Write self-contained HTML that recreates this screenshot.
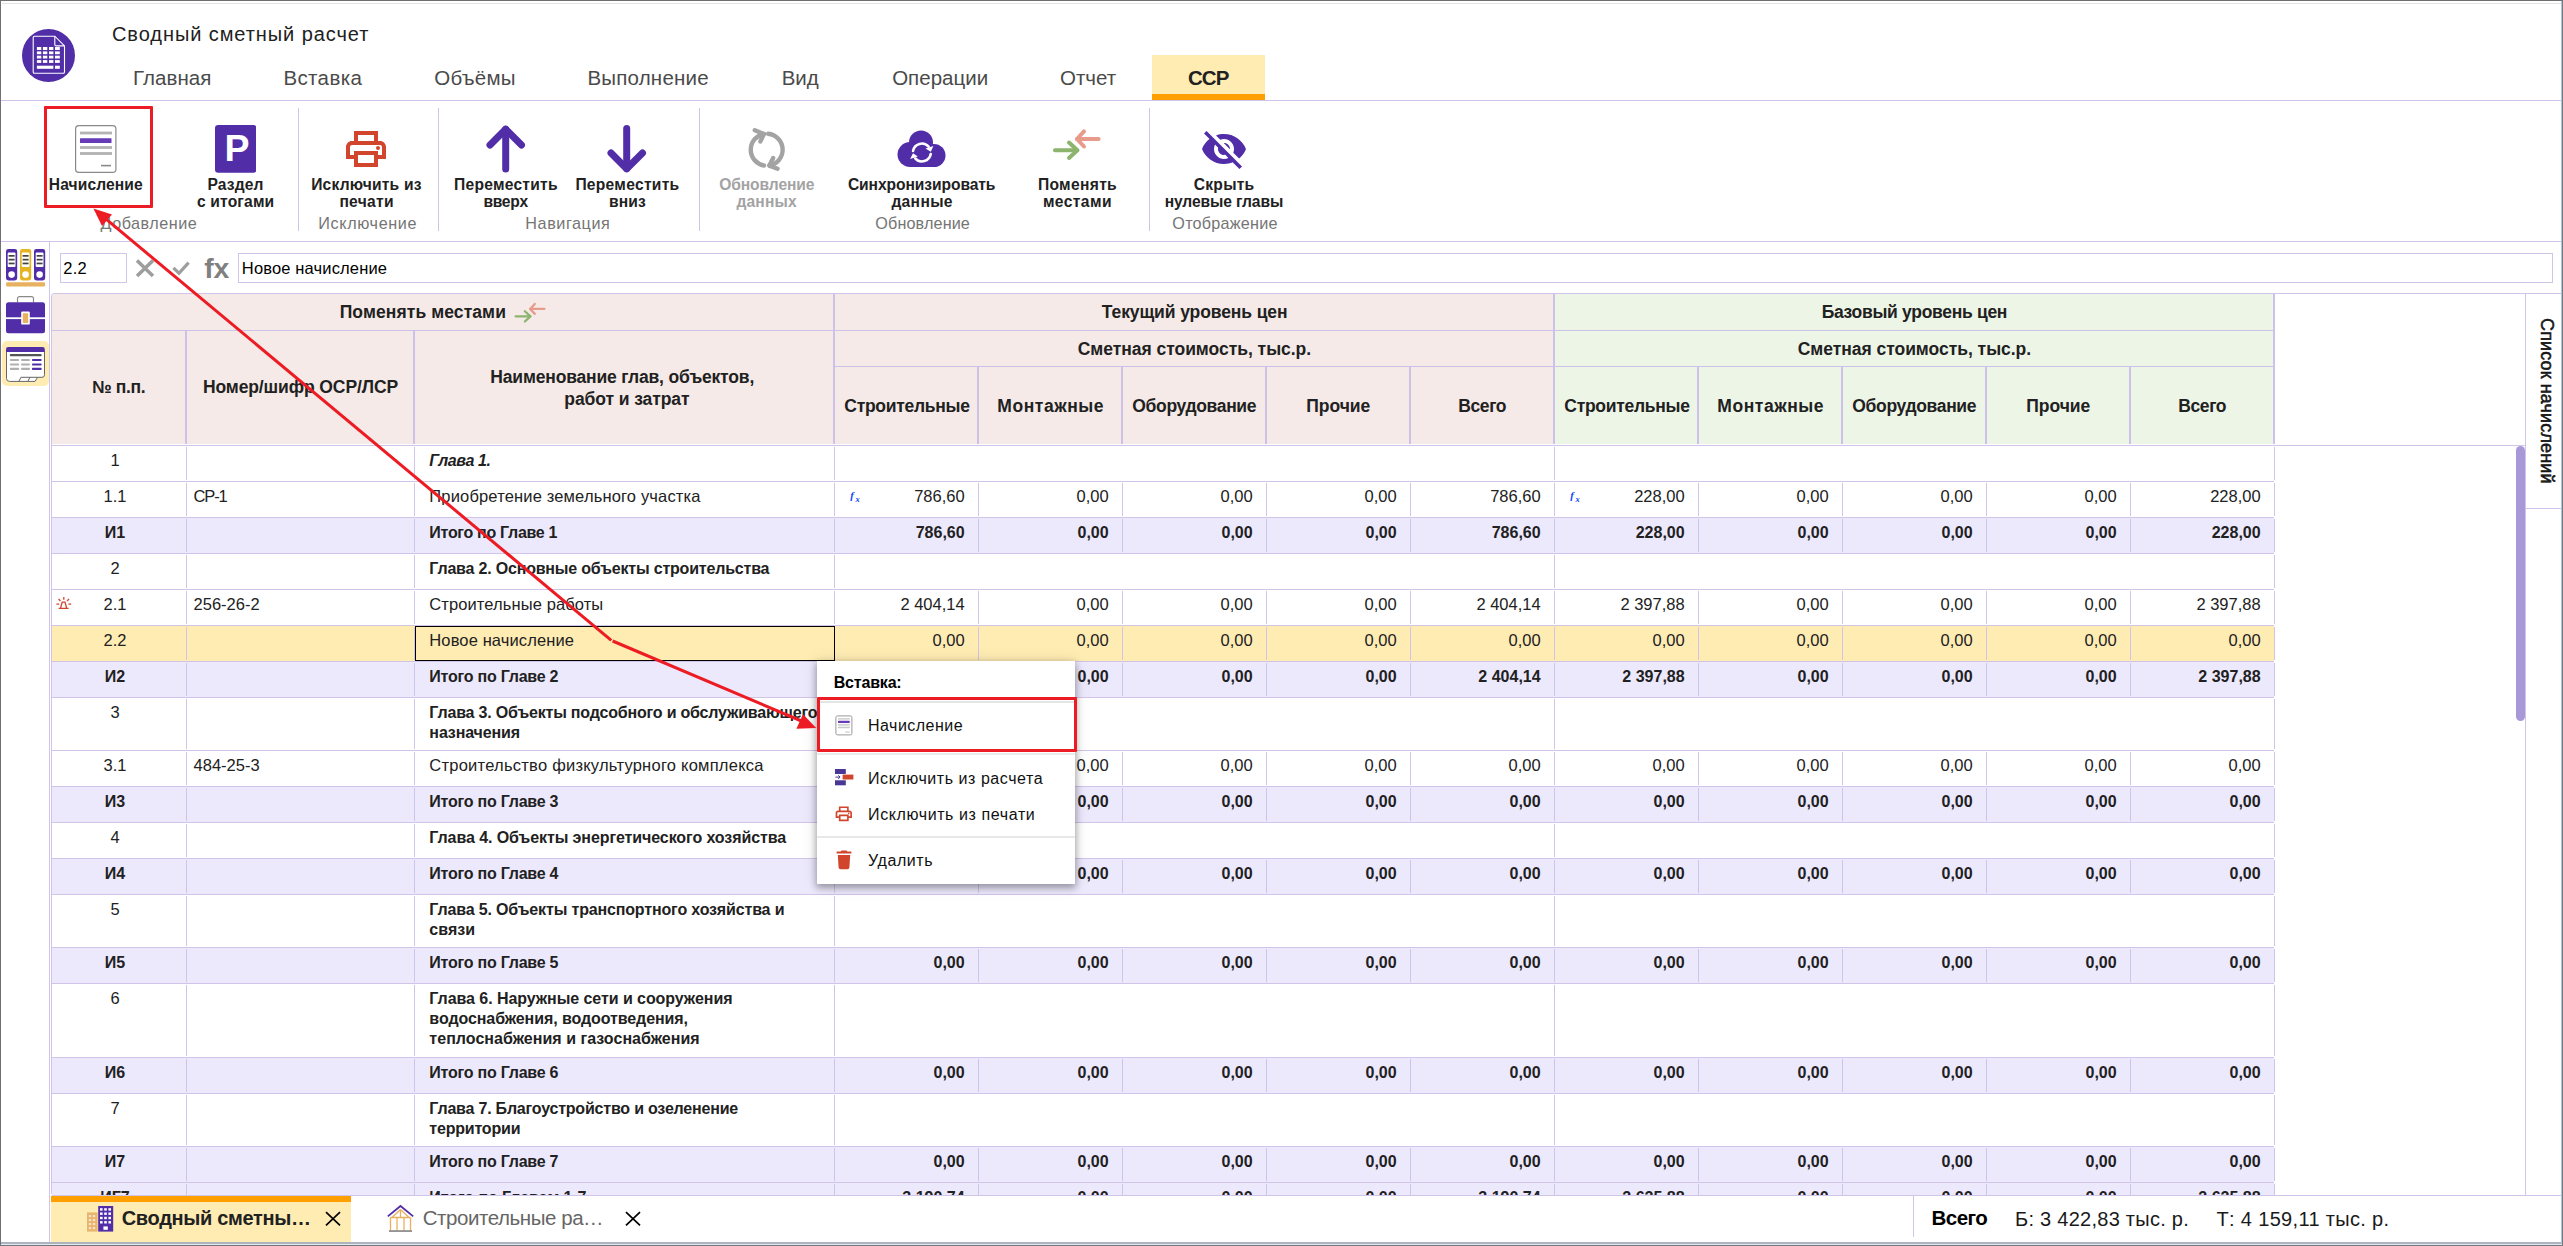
<!DOCTYPE html>
<html lang="ru"><head><meta charset="utf-8"><title>Сводный сметный расчет</title>
<style>
html,body{margin:0;padding:0;background:#fff}
body{width:2563px;height:1246px;overflow:hidden;position:relative;font-family:"Liberation Sans",sans-serif}
#r,#r div,#r svg,#r span{position:absolute;display:block}
#r{left:0;top:0;width:2563px;height:1246px;overflow:hidden}
#r span{white-space:nowrap;line-height:20px}
#r span{color:#212121}
</style></head>
<body><div id="r">
<svg style="left:22px;top:28.5px;" width="53" height="53" viewBox="0 0 53 53"><circle cx="26.5" cy="26.5" r="26.5" fill="#512da8"/>
<path d="M12.5 7.2h20.3l9.7 9.7v26a1.3 1.3 0 0 1-1.3 1.3h-28.7a1.3 1.3 0 0 1-1.3-1.3v-34.4a1.3 1.3 0 0 1 1.3-1.3z" fill="#512da8" stroke="#fff" stroke-width="1.1"/>
<path d="M32.8 7.2v8.2a1.5 1.5 0 0 0 1.5 1.5h8.2" fill="none" stroke="#fff" stroke-width="1.1"/>
<g fill="#fff"><rect x="14.9" y="18" width="4.4" height="3"/><rect x="20.9" y="18" width="4.4" height="3"/><rect x="27" y="18" width="4.4" height="3"/><rect x="33" y="18" width="4.8" height="3"/><rect x="14.9" y="22.4" width="4.4" height="2.8"/><rect x="20.9" y="22.4" width="4.4" height="2.8"/><rect x="27" y="22.4" width="4.4" height="2.8"/><rect x="33" y="22.4" width="4.8" height="2.8"/><rect x="14.9" y="26.7" width="4.4" height="2.8"/><rect x="20.9" y="26.7" width="4.4" height="2.8"/><rect x="27" y="26.7" width="4.4" height="2.8"/><rect x="33" y="26.7" width="4.8" height="2.8"/><rect x="14.9" y="31.1" width="4.4" height="2.8"/><rect x="20.9" y="31.1" width="4.4" height="2.8"/><rect x="27" y="31.1" width="4.4" height="2.8"/><rect x="33" y="31.1" width="4.8" height="2.8"/><rect x="14.9" y="36.7" width="16.5" height="3.1"/><rect x="33" y="36.7" width="4.8" height="3.1"/></g></svg>
<span style="left:112.00px;top:24px;font-size:20px;letter-spacing:0.927px;">Сводный сметный расчет</span>
<span style="left:132.93px;top:68px;font-size:20.5px;color:#4a4a4a;letter-spacing:0.067px;">Главная</span>
<span style="left:283.43px;top:68px;font-size:20.5px;color:#4a4a4a;letter-spacing:0.372px;">Вставка</span>
<span style="left:434.18px;top:68px;font-size:20.5px;color:#4a4a4a;letter-spacing:0.275px;">Объёмы</span>
<span style="left:587.43px;top:68px;font-size:20.5px;color:#4a4a4a;letter-spacing:0.206px;">Выполнение</span>
<span style="left:781.68px;top:68px;font-size:20.5px;color:#4a4a4a;letter-spacing:-0.079px;">Вид</span>
<span style="left:892.18px;top:68px;font-size:20.5px;color:#4a4a4a;letter-spacing:0.004px;">Операции</span>
<span style="left:1059.93px;top:68px;font-size:20.5px;color:#4a4a4a;letter-spacing:0.015px;">Отчет</span>
<div style="left:1152px;top:55px;width:113px;height:45px;background:#ffecb3;"></div>
<div style="left:1152px;top:94px;width:113px;height:6px;background:#ffa000;"></div>
<span style="left:1187.93px;top:68px;font-size:20.5px;font-weight:700;letter-spacing:-0.931px;">ССР</span>
<div style="left:1px;top:100px;width:2560px;height:1px;background:#d1c4e9;"></div>
<div style="left:298px;top:108px;width:1px;height:123px;background:#d1c4e9;"></div>
<div style="left:438px;top:108px;width:1px;height:123px;background:#d1c4e9;"></div>
<div style="left:699px;top:108px;width:1px;height:123px;background:#d1c4e9;"></div>
<div style="left:1149px;top:108px;width:1px;height:123px;background:#d1c4e9;"></div>
<div style="left:1px;top:241px;width:2560px;height:1px;background:#d1c4e9;"></div>
<svg style="left:75px;top:125px;" width="41.5" height="48.0" viewBox="0 0 41.5 48"><rect x="0.6" y="0.6" width="40.3" height="46.8" rx="3.2" fill="#fff" stroke="#8a8a8a" stroke-width="1.2"/>
<rect x="5" y="6.6" width="32" height="2.8" fill="#b3b3b3"/>
<rect x="5" y="13.2" width="31.5" height="4.8" rx="0.5" fill="#673ab7"/>
<rect x="5" y="21.1" width="32" height="2.8" fill="#b3b3b3"/>
<rect x="5" y="27.1" width="32" height="2.8" fill="#b3b3b3"/>
<rect x="26" y="39.8" width="10" height="1.6" fill="#8a8a8a"/></svg>
<svg style="left:214.7px;top:125px;" width="41.4" height="48" viewBox="0 0 41.4 48"><rect x="0" y="0" width="41.4" height="47.8" rx="3.2" fill="#512da8"/></svg>
<span style="left:224.39px;top:138px;font-size:37.5px;font-weight:700;color:#fff;">Р</span>
<svg style="left:342px;top:125px;" width="48" height="48" viewBox="0 0 24 24"><path fill="#d0452c" d="M19 8h-1V3H6v5H5c-1.66 0-3 1.34-3 3v6h4v4h12v-4h4v-6c0-1.66-1.34-3-3-3zM8 5h8v3H8V5zm8 12v2H8v-4h8v2zm2-2v-2H6v2H4v-4c0-.55.45-1 1-1h14c.55 0 1 .45 1 1v4h-2z"/><circle cx="18" cy="11.5" r="1" fill="#d0452c"/></svg>
<svg style="left:480px;top:120px;" width="52" height="58" viewBox="0 0 52 58"><g fill="none" stroke="#512da8" stroke-width="7" stroke-linecap="round" stroke-linejoin="round"><path d="M25.7 9.2V49"/><path d="M10 25L25.7 9.2 41.5 25"/></g></svg>
<svg style="left:601px;top:120px;" width="52" height="58" viewBox="0 0 52 58"><g fill="none" stroke="#512da8" stroke-width="7" stroke-linecap="round" stroke-linejoin="round"><path d="M25.7 8.5V48.6"/><path d="M10 33L25.7 48.8 41.5 33"/></g></svg>
<svg style="left:740px;top:122px;" width="54" height="56" viewBox="0 0 54 56"><g transform="translate(5,4)" fill="none" stroke="#a3a3a3" stroke-width="4.4" stroke-linecap="round" stroke-linejoin="round">
<path d="M18.97 7.94A16 16 0 0 0 19 39.46"/>
<path d="M9.8 4.2L18.9 8 15.4 15.4"/>
<path d="M23.1 7.8A16 16 0 0 1 24.35 39.5"/>
<path d="M28.2 32L24.4 39.6 32.6 42.8"/></g></svg>
<svg style="left:896px;top:129px;" width="52" height="40" viewBox="0 0 52 40"><g fill="#512da8"><circle cx="25" cy="13.6" r="12"/><circle cx="14" cy="25.5" r="12.5"/><circle cx="38" cy="26.5" r="11.5"/><rect x="14" y="20" width="24" height="18"/></g>
<g fill="none" stroke="#fff" stroke-width="2.6" stroke-linecap="round">
<path d="M17.04 21.94A9 9 0 0 1 32.6 17.6"/><path d="M34.76 25.06A9 9 0 0 1 19.2 29.4"/></g>
<path d="M37.4 17L34.8 22.8 29.5 19.4zM14.1 30L17 24.2 21.8 27.6z" fill="#fff"/></svg>
<svg style="left:1051px;top:127px;" width="52.0" height="36.0" viewBox="0 0 52 36"><g fill="none" stroke-width="4" stroke-linecap="round" stroke-linejoin="round">
<g stroke="#e89a8b"><path d="M26 12H47.6"/><path d="M33 4.4L26 12l7 7.5"/></g>
<g stroke="#8cb46c"><path d="M4 23.2H26.2"/><path d="M18 15.5l8.4 7.7L18 31"/></g></g></svg>
<svg style="left:1200px;top:125px;" width="48" height="48" viewBox="0 0 24 24"><path fill="#512da8" d="M12 7c2.76 0 5 2.24 5 5 0 .65-.13 1.26-.36 1.83l2.92 2.92c1.51-1.26 2.7-2.89 3.43-4.75-1.73-4.39-6-7.5-11-7.5-1.4 0-2.74.25-3.98.7l2.16 2.16C10.74 7.13 11.35 7 12 7zM2 4.27l2.28 2.28.46.46C3.08 8.3 1.78 10.02 1 12c1.73 4.39 6 7.5 11 7.5 1.55 0 3.03-.3 4.38-.84l.42.42L19.73 22 21 20.73 3.27 3 2 4.27zM7.53 9.8l1.55 1.55c-.05.21-.08.43-.08.65 0 1.66 1.34 3 3 3 .22 0 .44-.03.65-.08l1.55 1.55c-.67.33-1.41.53-2.2.53-2.76 0-5-2.24-5-5 0-.79.2-1.53.53-2.2zm4.31-.78l3.15 3.15.02-.16c0-1.66-1.34-3-3-3l-.17.01z"/></svg>
<span style="left:48.78px;top:175px;font-size:15.6px;font-weight:700;letter-spacing:0.113px;">Начисление</span>
<span style="left:207.38px;top:175px;font-size:15.6px;font-weight:700;letter-spacing:0.159px;">Раздел</span>
<span style="left:196.88px;top:192px;font-size:15.6px;font-weight:700;letter-spacing:0.187px;">с итогами</span>
<span style="left:311.18px;top:175px;font-size:15.6px;font-weight:700;letter-spacing:0.204px;">Исключить из</span>
<span style="left:339.38px;top:192px;font-size:15.6px;font-weight:700;letter-spacing:0.287px;">печати</span>
<span style="left:454.08px;top:175px;font-size:15.6px;font-weight:700;letter-spacing:0.239px;">Переместить</span>
<span style="left:483.38px;top:192px;font-size:15.6px;font-weight:700;letter-spacing:-0.237px;">вверх</span>
<span style="left:575.38px;top:175px;font-size:15.6px;font-weight:700;letter-spacing:0.279px;">Переместить</span>
<span style="left:608.98px;top:192px;font-size:15.6px;font-weight:700;letter-spacing:0.149px;">вниз</span>
<span style="left:719.13px;top:175px;font-size:15.6px;font-weight:700;color:#a3a3a3;letter-spacing:-0.089px;">Обновление</span>
<span style="left:736.38px;top:192px;font-size:15.6px;font-weight:700;color:#a3a3a3;letter-spacing:0.187px;">данных</span>
<span style="left:847.88px;top:175px;font-size:15.6px;font-weight:700;letter-spacing:-0.072px;">Синхронизировать</span>
<span style="left:891.38px;top:192px;font-size:15.6px;font-weight:700;letter-spacing:0.337px;">данные</span>
<span style="left:1037.88px;top:175px;font-size:15.6px;font-weight:700;letter-spacing:0.337px;">Поменять</span>
<span style="left:1042.88px;top:192px;font-size:15.6px;font-weight:700;letter-spacing:0.414px;">местами</span>
<span style="left:1193.78px;top:175px;font-size:15.6px;font-weight:700;letter-spacing:0.260px;">Скрыть</span>
<span style="left:1164.63px;top:192px;font-size:15.6px;font-weight:700;letter-spacing:-0.098px;">нулевые главы</span>
<span style="left:100.60px;top:213px;font-size:16.2px;color:#757575;letter-spacing:0.491px;">Добавление</span>
<span style="left:318.35px;top:213px;font-size:16.2px;color:#757575;letter-spacing:0.609px;">Исключение</span>
<span style="left:525.35px;top:213px;font-size:16.2px;color:#757575;letter-spacing:0.558px;">Навигация</span>
<span style="left:875.35px;top:213px;font-size:16.2px;color:#757575;letter-spacing:0.118px;">Обновление</span>
<span style="left:1172.35px;top:213px;font-size:16.2px;color:#757575;letter-spacing:0.221px;">Отображение</span>
<div style="left:44px;top:105.5px;width:109.4px;height:102.8px;border:3px solid #ed1c24;border-radius:1px;box-sizing:border-box"></div>
<div style="left:49px;top:241px;width:1px;height:1001px;background:#d1c4e9;"></div>
<svg style="left:6px;top:249px;" width="40" height="38" viewBox="0 0 40 38"><rect x="0" y="0" width="11.2" height="31.5" rx="2.4" fill="#512da8"/><rect x="1.7" y="3.6" width="7.8" height="14.5" rx="1" fill="#fff"/><rect x="2.6" y="6.0" width="6" height="1.7" fill="#444"/><rect x="2.6" y="9.8" width="6" height="1.7" fill="#444"/><rect x="2.6" y="13.6" width="6" height="1.7" fill="#444"/><circle cx="5.6" cy="25.6" r="3.3" fill="#fff"/><rect x="14" y="0" width="11.2" height="31.5" rx="2.4" fill="#e6b422"/><rect x="15.7" y="3.6" width="7.8" height="14.5" rx="1" fill="#fff"/><rect x="16.6" y="6.0" width="6" height="1.7" fill="#444"/><rect x="16.6" y="9.8" width="6" height="1.7" fill="#444"/><rect x="16.6" y="13.6" width="6" height="1.7" fill="#444"/><circle cx="19.6" cy="25.6" r="3.3" fill="#fff"/><rect x="28" y="0" width="11.2" height="31.5" rx="2.4" fill="#512da8"/><rect x="29.7" y="3.6" width="7.8" height="14.5" rx="1" fill="#fff"/><rect x="30.6" y="6.0" width="6" height="1.7" fill="#444"/><rect x="30.6" y="9.8" width="6" height="1.7" fill="#444"/><rect x="30.6" y="13.6" width="6" height="1.7" fill="#444"/><circle cx="33.6" cy="25.6" r="3.3" fill="#fff"/><rect x="0" y="33.2" width="39.2" height="4.4" rx="1.5" fill="#e8b15f"/></svg>
<svg style="left:6px;top:295px;" width="40" height="40" viewBox="0 0 40 40"><path d="M11.5 7.4V3.6a2 2 0 0 1 2-2h12a2 2 0 0 1 2 2v3.8" fill="none" stroke="#8a8a8a" stroke-width="1.2"/>
<rect x="0" y="7.3" width="39" height="31" rx="2.5" fill="#512da8"/>
<rect x="0" y="22.3" width="39" height="1.8" fill="#fff"/>
<rect x="15.2" y="16.6" width="8.6" height="13" rx="1.2" fill="#fff"/><rect x="16.8" y="18.3" width="5.4" height="9.6" rx="0.6" fill="#e8b15f"/></svg>
<div style="left:1.7px;top:341px;width:47px;height:45px;background:#ffecb3;border-radius:5px"></div>
<svg style="left:6px;top:346px;" width="40" height="40" viewBox="0 0 40 40"><path d="M0.5 5.5V32.4a3 3 0 0 0 3 3H29l2.6-4.1H36a2.5 2.5 0 0 0 2.5-2.5V5.5z" fill="#fff" stroke="#666" stroke-width="1"/>
<path d="M13 35.2l1.9-3.9H31.6M22 35.2l1.9-3.9" fill="none" stroke="#666" stroke-width="1"/>
<path d="M0 3.2a2.2 2.2 0 0 1 2.2-2.2h34.4a2.2 2.2 0 0 1 2.2 2.2v2.9h-38.8z" fill="#512da8"/>
<rect x="3.8" y="8" width="31.9" height="2.3" rx="1.1" fill="#555"/>
<rect x="3.8" y="13" width="9.4" height="2.1" rx="1" fill="#b0b0b0"/><rect x="15" y="13" width="9" height="2.1" rx="1" fill="#b0b0b0"/><rect x="25.9" y="13" width="9.8" height="2.1" rx="1" fill="#512da8"/><rect x="3.8" y="17.4" width="9.4" height="2.1" rx="1" fill="#b0b0b0"/><rect x="15" y="17.4" width="9" height="2.1" rx="1" fill="#b0b0b0"/><rect x="25.9" y="17.4" width="9.8" height="2.1" rx="1" fill="#512da8"/><rect x="3.8" y="21.8" width="9.4" height="2.1" rx="1" fill="#b0b0b0"/><rect x="15" y="21.8" width="9" height="2.1" rx="1" fill="#b0b0b0"/><rect x="25.9" y="21.8" width="9.8" height="2.1" rx="1" fill="#512da8"/></svg>
<div style="left:60px;top:253px;width:67px;height:30px;border:1px solid #d1c4e9;box-sizing:border-box;background:#fff"></div>
<span style="left:63.24px;top:258px;font-size:16.5px;color:#000;letter-spacing:0.259px;">2.2</span>
<svg style="left:132px;top:256px;" width="26" height="24" viewBox="0 0 26 24"><path d="M5 4.5L21 20M21 4.5L5 20" stroke="#9e9e9e" stroke-width="3.6" fill="none"/></svg>
<svg style="left:169px;top:257px;" width="24" height="22" viewBox="0 0 24 22"><path d="M4.4 10.8L10 16.2 19.6 5.6" stroke="#9e9e9e" stroke-width="3.2" fill="none"/></svg>
<span style="left:204.16px;top:258px;font-size:28.4px;font-weight:700;color:#808080;letter-spacing:-0.062px;">fx</span>
<div style="left:238px;top:253px;width:2315px;height:30px;border:1px solid #d1c4e9;box-sizing:border-box;background:#fff"></div>
<span style="left:241.84px;top:258px;font-size:16.5px;color:#000;letter-spacing:0.149px;">Новое начисление</span>
<div style="left:51px;top:293px;width:2475px;height:903px;border:1px solid #d1c4e9;border-radius:4px 0 0 4px;box-sizing:border-box;border-right:none"></div>
<div style="left:2525px;top:293px;width:1px;height:902px;background:#d1c4e9;"></div>
<div style="left:52px;top:1195px;width:2509px;height:1px;background:#d1c4e9;"></div>
<div style="left:52px;top:294px;width:1502px;height:150px;background:#f5eae7;border-radius:3px 0 0 0"></div>
<div style="left:1554px;top:294px;width:720px;height:150px;background:#edf5e7;"></div>
<div style="left:52px;top:445px;width:2473px;height:1px;background:#d1c4e9;"></div>
<div style="left:52px;top:330px;width:2222px;height:1px;background:#ccc1e9;"></div>
<div style="left:834px;top:366px;width:1440px;height:1px;background:#ccc1e9;"></div>
<div style="left:185px;top:331px;width:2px;height:113px;background:#ccc1e9;"></div>
<div style="left:413px;top:331px;width:2px;height:113px;background:#ccc1e9;"></div>
<div style="left:833px;top:294px;width:2px;height:150px;background:#ccc1e9;"></div>
<div style="left:1553px;top:294px;width:2px;height:150px;background:#ccc1e9;"></div>
<div style="left:2273px;top:294px;width:2px;height:150px;background:#ccc1e9;"></div>
<div style="left:977px;top:367px;width:2px;height:77px;background:#ccc1e9;"></div>
<div style="left:1121px;top:367px;width:2px;height:77px;background:#ccc1e9;"></div>
<div style="left:1265px;top:367px;width:2px;height:77px;background:#ccc1e9;"></div>
<div style="left:1409px;top:367px;width:2px;height:77px;background:#ccc1e9;"></div>
<div style="left:1697px;top:367px;width:2px;height:77px;background:#ccc1e9;"></div>
<div style="left:1841px;top:367px;width:2px;height:77px;background:#ccc1e9;"></div>
<div style="left:1985px;top:367px;width:2px;height:77px;background:#ccc1e9;"></div>
<div style="left:2129px;top:367px;width:2px;height:77px;background:#ccc1e9;"></div>
<span style="left:339.70px;top:302px;font-size:17.5px;font-weight:700;letter-spacing:0.090px;">Поменять местами</span>
<svg style="left:513.3px;top:300.6px;" width="34.3" height="23.8" viewBox="0 0 52 36"><g fill="none" stroke-width="3.4" stroke-linecap="round" stroke-linejoin="round">
<g stroke="#e89a8b"><path d="M26 12H47.6"/><path d="M33 4.4L26 12l7 7.5"/></g>
<g stroke="#8cb46c"><path d="M4 23.2H26.2"/><path d="M18 15.5l8.4 7.7L18 31"/></g></g></svg>
<span style="left:92.30px;top:377px;font-size:17.5px;font-weight:700;letter-spacing:-0.402px;">№ п.п.</span>
<span style="left:202.90px;top:377px;font-size:17.5px;font-weight:700;letter-spacing:-0.100px;">Номер/шифр ОСР/ЛСР</span>
<span style="left:490.30px;top:367px;font-size:17.5px;font-weight:700;letter-spacing:-0.172px;">Наименование глав, объектов,</span>
<span style="left:564.30px;top:389px;font-size:17.5px;font-weight:700;letter-spacing:-0.084px;">работ и затрат</span>
<span style="left:1101.80px;top:302px;font-size:17.5px;font-weight:700;letter-spacing:-0.103px;">Текущий уровень цен</span>
<span style="left:1077.70px;top:339px;font-size:17.5px;font-weight:700;letter-spacing:-0.032px;">Сметная стоимость, тыс.р.</span>
<span style="left:844.30px;top:396px;font-size:17.5px;font-weight:700;letter-spacing:-0.278px;">Строительные</span>
<span style="left:997.30px;top:396px;font-size:17.5px;font-weight:700;letter-spacing:0.554px;">Монтажные</span>
<span style="left:1132.30px;top:396px;font-size:17.5px;font-weight:700;letter-spacing:-0.343px;">Оборудование</span>
<span style="left:1306.30px;top:396px;font-size:17.5px;font-weight:700;letter-spacing:-0.052px;">Прочие</span>
<span style="left:1458.30px;top:396px;font-size:17.5px;font-weight:700;letter-spacing:-0.409px;">Всего</span>
<span style="left:1821.70px;top:302px;font-size:17.5px;font-weight:700;letter-spacing:-0.304px;">Базовый уровень цен</span>
<span style="left:1797.70px;top:339px;font-size:17.5px;font-weight:700;letter-spacing:-0.032px;">Сметная стоимость, тыс.р.</span>
<span style="left:1564.30px;top:396px;font-size:17.5px;font-weight:700;letter-spacing:-0.278px;">Строительные</span>
<span style="left:1717.30px;top:396px;font-size:17.5px;font-weight:700;letter-spacing:0.554px;">Монтажные</span>
<span style="left:1852.30px;top:396px;font-size:17.5px;font-weight:700;letter-spacing:-0.343px;">Оборудование</span>
<span style="left:2026.30px;top:396px;font-size:17.5px;font-weight:700;letter-spacing:-0.053px;">Прочие</span>
<span style="left:2178.30px;top:396px;font-size:17.5px;font-weight:700;letter-spacing:-0.409px;">Всего</span>
<div id="tb" style="left:0;top:446px;width:2526px;height:749px;overflow:hidden">
<div style="left:52px;top:35px;width:2222px;height:1px;background:#d1c4e9;"></div>
<div style="left:186px;top:1px;width:1px;height:33px;background:#d1c4e9;"></div>
<div style="left:414px;top:1px;width:1px;height:33px;background:#d1c4e9;"></div>
<div style="left:834px;top:1px;width:1px;height:33px;background:#d1c4e9;"></div>
<div style="left:1554px;top:1px;width:1px;height:33px;background:#d1c4e9;"></div>
<div style="left:2274px;top:1px;width:1px;height:33px;background:#d1c4e9;"></div>
<span style="left:110.41px;top:4px;font-size:16.5px;">1</span>
<span style="left:429.36px;top:5px;font-size:16px;font-weight:700;font-style:italic;letter-spacing:-0.369px;">Глава 1.</span>
<div style="left:52px;top:71px;width:2222px;height:1px;background:#d1c4e9;"></div>
<div style="left:186px;top:37px;width:1px;height:33px;background:#d1c4e9;"></div>
<div style="left:414px;top:37px;width:1px;height:33px;background:#d1c4e9;"></div>
<div style="left:834px;top:37px;width:1px;height:33px;background:#d1c4e9;"></div>
<div style="left:978px;top:37px;width:1px;height:33px;background:#d1c4e9;"></div>
<div style="left:1122px;top:37px;width:1px;height:33px;background:#d1c4e9;"></div>
<div style="left:1266px;top:37px;width:1px;height:33px;background:#d1c4e9;"></div>
<div style="left:1410px;top:37px;width:1px;height:33px;background:#d1c4e9;"></div>
<div style="left:1554px;top:37px;width:1px;height:33px;background:#d1c4e9;"></div>
<div style="left:1698px;top:37px;width:1px;height:33px;background:#d1c4e9;"></div>
<div style="left:1842px;top:37px;width:1px;height:33px;background:#d1c4e9;"></div>
<div style="left:1986px;top:37px;width:1px;height:33px;background:#d1c4e9;"></div>
<div style="left:2130px;top:37px;width:1px;height:33px;background:#d1c4e9;"></div>
<div style="left:2274px;top:37px;width:1px;height:33px;background:#d1c4e9;"></div>
<span style="left:103.53px;top:40px;font-size:16.5px;">1.1</span>
<span style="left:193.54px;top:40px;font-size:16.5px;letter-spacing:-1.146px;">СР-1</span>
<span style="left:429.34px;top:40px;font-size:16.5px;letter-spacing:0.159px;">Приобретение земельного участка</span>
<span style="left:914.19px;top:40px;font-size:16.5px;">786,60</span>
<span style="left:1076.54px;top:40px;font-size:16.5px;">0,00</span>
<span style="left:1220.54px;top:40px;font-size:16.5px;">0,00</span>
<span style="left:1364.54px;top:40px;font-size:16.5px;">0,00</span>
<span style="left:1490.19px;top:40px;font-size:16.5px;">786,60</span>
<span style="left:1634.19px;top:40px;font-size:16.5px;">228,00</span>
<span style="left:1796.54px;top:40px;font-size:16.5px;">0,00</span>
<span style="left:1940.54px;top:40px;font-size:16.5px;">0,00</span>
<span style="left:2084.53px;top:40px;font-size:16.5px;">0,00</span>
<span style="left:2210.19px;top:40px;font-size:16.5px;">228,00</span>
<div style="left:52px;top:72px;width:2222px;height:35px;background:#ede9fd;"></div>
<div style="left:52px;top:107px;width:2222px;height:1px;background:#d1c4e9;"></div>
<div style="left:186px;top:73px;width:1px;height:33px;background:#d1c4e9;"></div>
<div style="left:414px;top:73px;width:1px;height:33px;background:#d1c4e9;"></div>
<div style="left:834px;top:73px;width:1px;height:33px;background:#d1c4e9;"></div>
<div style="left:978px;top:73px;width:1px;height:33px;background:#d1c4e9;"></div>
<div style="left:1122px;top:73px;width:1px;height:33px;background:#d1c4e9;"></div>
<div style="left:1266px;top:73px;width:1px;height:33px;background:#d1c4e9;"></div>
<div style="left:1410px;top:73px;width:1px;height:33px;background:#d1c4e9;"></div>
<div style="left:1554px;top:73px;width:1px;height:33px;background:#d1c4e9;"></div>
<div style="left:1698px;top:73px;width:1px;height:33px;background:#d1c4e9;"></div>
<div style="left:1842px;top:73px;width:1px;height:33px;background:#d1c4e9;"></div>
<div style="left:1986px;top:73px;width:1px;height:33px;background:#d1c4e9;"></div>
<div style="left:2130px;top:73px;width:1px;height:33px;background:#d1c4e9;"></div>
<div style="left:2274px;top:73px;width:1px;height:33px;background:#d1c4e9;"></div>
<span style="left:104.80px;top:77px;font-size:16px;font-weight:700;">И1</span>
<span style="left:429.36px;top:77px;font-size:16px;font-weight:700;letter-spacing:-0.302px;">Итого по Главе 1</span>
<span style="left:915.70px;top:77px;font-size:16px;font-weight:700;">786,60</span>
<span style="left:1077.50px;top:77px;font-size:16px;font-weight:700;">0,00</span>
<span style="left:1221.50px;top:77px;font-size:16px;font-weight:700;">0,00</span>
<span style="left:1365.50px;top:77px;font-size:16px;font-weight:700;">0,00</span>
<span style="left:1491.70px;top:77px;font-size:16px;font-weight:700;">786,60</span>
<span style="left:1635.70px;top:77px;font-size:16px;font-weight:700;">228,00</span>
<span style="left:1797.50px;top:77px;font-size:16px;font-weight:700;">0,00</span>
<span style="left:1941.50px;top:77px;font-size:16px;font-weight:700;">0,00</span>
<span style="left:2085.50px;top:77px;font-size:16px;font-weight:700;">0,00</span>
<span style="left:2211.70px;top:77px;font-size:16px;font-weight:700;">228,00</span>
<div style="left:52px;top:143px;width:2222px;height:1px;background:#d1c4e9;"></div>
<div style="left:186px;top:109px;width:1px;height:33px;background:#d1c4e9;"></div>
<div style="left:414px;top:109px;width:1px;height:33px;background:#d1c4e9;"></div>
<div style="left:834px;top:109px;width:1px;height:33px;background:#d1c4e9;"></div>
<div style="left:1554px;top:109px;width:1px;height:33px;background:#d1c4e9;"></div>
<div style="left:2274px;top:109px;width:1px;height:33px;background:#d1c4e9;"></div>
<span style="left:110.41px;top:112px;font-size:16.5px;">2</span>
<span style="left:429.36px;top:113px;font-size:16px;font-weight:700;letter-spacing:-0.193px;">Глава 2. Основные объекты строительства</span>
<div style="left:52px;top:179px;width:2222px;height:1px;background:#d1c4e9;"></div>
<div style="left:186px;top:145px;width:1px;height:33px;background:#d1c4e9;"></div>
<div style="left:414px;top:145px;width:1px;height:33px;background:#d1c4e9;"></div>
<div style="left:834px;top:145px;width:1px;height:33px;background:#d1c4e9;"></div>
<div style="left:978px;top:145px;width:1px;height:33px;background:#d1c4e9;"></div>
<div style="left:1122px;top:145px;width:1px;height:33px;background:#d1c4e9;"></div>
<div style="left:1266px;top:145px;width:1px;height:33px;background:#d1c4e9;"></div>
<div style="left:1410px;top:145px;width:1px;height:33px;background:#d1c4e9;"></div>
<div style="left:1554px;top:145px;width:1px;height:33px;background:#d1c4e9;"></div>
<div style="left:1698px;top:145px;width:1px;height:33px;background:#d1c4e9;"></div>
<div style="left:1842px;top:145px;width:1px;height:33px;background:#d1c4e9;"></div>
<div style="left:1986px;top:145px;width:1px;height:33px;background:#d1c4e9;"></div>
<div style="left:2130px;top:145px;width:1px;height:33px;background:#d1c4e9;"></div>
<div style="left:2274px;top:145px;width:1px;height:33px;background:#d1c4e9;"></div>
<span style="left:103.53px;top:148px;font-size:16.5px;">2.1</span>
<span style="left:193.54px;top:148px;font-size:16.5px;">256-26-2</span>
<span style="left:429.34px;top:148px;font-size:16.5px;letter-spacing:0.100px;">Строительные работы</span>
<span style="left:900.43px;top:148px;font-size:16.5px;">2 404,14</span>
<span style="left:1076.54px;top:148px;font-size:16.5px;">0,00</span>
<span style="left:1220.54px;top:148px;font-size:16.5px;">0,00</span>
<span style="left:1364.54px;top:148px;font-size:16.5px;">0,00</span>
<span style="left:1476.43px;top:148px;font-size:16.5px;">2 404,14</span>
<span style="left:1620.43px;top:148px;font-size:16.5px;">2 397,88</span>
<span style="left:1796.54px;top:148px;font-size:16.5px;">0,00</span>
<span style="left:1940.54px;top:148px;font-size:16.5px;">0,00</span>
<span style="left:2084.53px;top:148px;font-size:16.5px;">0,00</span>
<span style="left:2196.43px;top:148px;font-size:16.5px;">2 397,88</span>
<div style="left:52px;top:180px;width:2222px;height:35px;background:#ffecb3;"></div>
<div style="left:52px;top:215px;width:2222px;height:1px;background:#d1c4e9;"></div>
<div style="left:186px;top:181px;width:1px;height:33px;background:#d1c4e9;"></div>
<div style="left:414px;top:181px;width:1px;height:33px;background:#d1c4e9;"></div>
<div style="left:834px;top:181px;width:1px;height:33px;background:#d1c4e9;"></div>
<div style="left:978px;top:181px;width:1px;height:33px;background:#d1c4e9;"></div>
<div style="left:1122px;top:181px;width:1px;height:33px;background:#d1c4e9;"></div>
<div style="left:1266px;top:181px;width:1px;height:33px;background:#d1c4e9;"></div>
<div style="left:1410px;top:181px;width:1px;height:33px;background:#d1c4e9;"></div>
<div style="left:1554px;top:181px;width:1px;height:33px;background:#d1c4e9;"></div>
<div style="left:1698px;top:181px;width:1px;height:33px;background:#d1c4e9;"></div>
<div style="left:1842px;top:181px;width:1px;height:33px;background:#d1c4e9;"></div>
<div style="left:1986px;top:181px;width:1px;height:33px;background:#d1c4e9;"></div>
<div style="left:2130px;top:181px;width:1px;height:33px;background:#d1c4e9;"></div>
<div style="left:2274px;top:181px;width:1px;height:33px;background:#d1c4e9;"></div>
<span style="left:103.53px;top:184px;font-size:16.5px;">2.2</span>
<span style="left:429.34px;top:184px;font-size:16.5px;letter-spacing:0.116px;">Новое начисление</span>
<span style="left:932.53px;top:184px;font-size:16.5px;">0,00</span>
<span style="left:1076.54px;top:184px;font-size:16.5px;">0,00</span>
<span style="left:1220.54px;top:184px;font-size:16.5px;">0,00</span>
<span style="left:1364.54px;top:184px;font-size:16.5px;">0,00</span>
<span style="left:1508.54px;top:184px;font-size:16.5px;">0,00</span>
<span style="left:1652.54px;top:184px;font-size:16.5px;">0,00</span>
<span style="left:1796.54px;top:184px;font-size:16.5px;">0,00</span>
<span style="left:1940.54px;top:184px;font-size:16.5px;">0,00</span>
<span style="left:2084.53px;top:184px;font-size:16.5px;">0,00</span>
<span style="left:2228.53px;top:184px;font-size:16.5px;">0,00</span>
<div style="left:52px;top:216px;width:2222px;height:35px;background:#ede9fd;"></div>
<div style="left:52px;top:251px;width:2222px;height:1px;background:#d1c4e9;"></div>
<div style="left:186px;top:217px;width:1px;height:33px;background:#d1c4e9;"></div>
<div style="left:414px;top:217px;width:1px;height:33px;background:#d1c4e9;"></div>
<div style="left:834px;top:217px;width:1px;height:33px;background:#d1c4e9;"></div>
<div style="left:978px;top:217px;width:1px;height:33px;background:#d1c4e9;"></div>
<div style="left:1122px;top:217px;width:1px;height:33px;background:#d1c4e9;"></div>
<div style="left:1266px;top:217px;width:1px;height:33px;background:#d1c4e9;"></div>
<div style="left:1410px;top:217px;width:1px;height:33px;background:#d1c4e9;"></div>
<div style="left:1554px;top:217px;width:1px;height:33px;background:#d1c4e9;"></div>
<div style="left:1698px;top:217px;width:1px;height:33px;background:#d1c4e9;"></div>
<div style="left:1842px;top:217px;width:1px;height:33px;background:#d1c4e9;"></div>
<div style="left:1986px;top:217px;width:1px;height:33px;background:#d1c4e9;"></div>
<div style="left:2130px;top:217px;width:1px;height:33px;background:#d1c4e9;"></div>
<div style="left:2274px;top:217px;width:1px;height:33px;background:#d1c4e9;"></div>
<span style="left:104.80px;top:221px;font-size:16px;font-weight:700;">И2</span>
<span style="left:429.36px;top:221px;font-size:16px;font-weight:700;letter-spacing:-0.236px;">Итого по Главе 2</span>
<span style="left:902.36px;top:221px;font-size:16px;font-weight:700;">2 404,14</span>
<span style="left:1077.50px;top:221px;font-size:16px;font-weight:700;">0,00</span>
<span style="left:1221.50px;top:221px;font-size:16px;font-weight:700;">0,00</span>
<span style="left:1365.50px;top:221px;font-size:16px;font-weight:700;">0,00</span>
<span style="left:1478.36px;top:221px;font-size:16px;font-weight:700;">2 404,14</span>
<span style="left:1622.36px;top:221px;font-size:16px;font-weight:700;">2 397,88</span>
<span style="left:1797.50px;top:221px;font-size:16px;font-weight:700;">0,00</span>
<span style="left:1941.50px;top:221px;font-size:16px;font-weight:700;">0,00</span>
<span style="left:2085.50px;top:221px;font-size:16px;font-weight:700;">0,00</span>
<span style="left:2198.36px;top:221px;font-size:16px;font-weight:700;">2 397,88</span>
<div style="left:52px;top:304px;width:2222px;height:1px;background:#d1c4e9;"></div>
<div style="left:186px;top:253px;width:1px;height:50px;background:#d1c4e9;"></div>
<div style="left:414px;top:253px;width:1px;height:50px;background:#d1c4e9;"></div>
<div style="left:834px;top:253px;width:1px;height:50px;background:#d1c4e9;"></div>
<div style="left:1554px;top:253px;width:1px;height:50px;background:#d1c4e9;"></div>
<div style="left:2274px;top:253px;width:1px;height:50px;background:#d1c4e9;"></div>
<span style="left:110.41px;top:256px;font-size:16.5px;">3</span>
<span style="left:429.36px;top:257px;font-size:16px;font-weight:700;letter-spacing:-0.189px;">Глава 3. Объекты подсобного и обслуживающего</span>
<span style="left:429.36px;top:277px;font-size:16px;font-weight:700;letter-spacing:-0.143px;">назначения</span>
<div style="left:52px;top:340px;width:2222px;height:1px;background:#d1c4e9;"></div>
<div style="left:186px;top:306px;width:1px;height:33px;background:#d1c4e9;"></div>
<div style="left:414px;top:306px;width:1px;height:33px;background:#d1c4e9;"></div>
<div style="left:834px;top:306px;width:1px;height:33px;background:#d1c4e9;"></div>
<div style="left:978px;top:306px;width:1px;height:33px;background:#d1c4e9;"></div>
<div style="left:1122px;top:306px;width:1px;height:33px;background:#d1c4e9;"></div>
<div style="left:1266px;top:306px;width:1px;height:33px;background:#d1c4e9;"></div>
<div style="left:1410px;top:306px;width:1px;height:33px;background:#d1c4e9;"></div>
<div style="left:1554px;top:306px;width:1px;height:33px;background:#d1c4e9;"></div>
<div style="left:1698px;top:306px;width:1px;height:33px;background:#d1c4e9;"></div>
<div style="left:1842px;top:306px;width:1px;height:33px;background:#d1c4e9;"></div>
<div style="left:1986px;top:306px;width:1px;height:33px;background:#d1c4e9;"></div>
<div style="left:2130px;top:306px;width:1px;height:33px;background:#d1c4e9;"></div>
<div style="left:2274px;top:306px;width:1px;height:33px;background:#d1c4e9;"></div>
<span style="left:103.53px;top:309px;font-size:16.5px;">3.1</span>
<span style="left:193.54px;top:309px;font-size:16.5px;">484-25-3</span>
<span style="left:429.34px;top:309px;font-size:16.5px;letter-spacing:0.242px;">Строительство физкультурного комплекса</span>
<span style="left:932.53px;top:309px;font-size:16.5px;">0,00</span>
<span style="left:1076.54px;top:309px;font-size:16.5px;">0,00</span>
<span style="left:1220.54px;top:309px;font-size:16.5px;">0,00</span>
<span style="left:1364.54px;top:309px;font-size:16.5px;">0,00</span>
<span style="left:1508.54px;top:309px;font-size:16.5px;">0,00</span>
<span style="left:1652.54px;top:309px;font-size:16.5px;">0,00</span>
<span style="left:1796.54px;top:309px;font-size:16.5px;">0,00</span>
<span style="left:1940.54px;top:309px;font-size:16.5px;">0,00</span>
<span style="left:2084.53px;top:309px;font-size:16.5px;">0,00</span>
<span style="left:2228.53px;top:309px;font-size:16.5px;">0,00</span>
<div style="left:52px;top:341px;width:2222px;height:35px;background:#ede9fd;"></div>
<div style="left:52px;top:376px;width:2222px;height:1px;background:#d1c4e9;"></div>
<div style="left:186px;top:342px;width:1px;height:33px;background:#d1c4e9;"></div>
<div style="left:414px;top:342px;width:1px;height:33px;background:#d1c4e9;"></div>
<div style="left:834px;top:342px;width:1px;height:33px;background:#d1c4e9;"></div>
<div style="left:978px;top:342px;width:1px;height:33px;background:#d1c4e9;"></div>
<div style="left:1122px;top:342px;width:1px;height:33px;background:#d1c4e9;"></div>
<div style="left:1266px;top:342px;width:1px;height:33px;background:#d1c4e9;"></div>
<div style="left:1410px;top:342px;width:1px;height:33px;background:#d1c4e9;"></div>
<div style="left:1554px;top:342px;width:1px;height:33px;background:#d1c4e9;"></div>
<div style="left:1698px;top:342px;width:1px;height:33px;background:#d1c4e9;"></div>
<div style="left:1842px;top:342px;width:1px;height:33px;background:#d1c4e9;"></div>
<div style="left:1986px;top:342px;width:1px;height:33px;background:#d1c4e9;"></div>
<div style="left:2130px;top:342px;width:1px;height:33px;background:#d1c4e9;"></div>
<div style="left:2274px;top:342px;width:1px;height:33px;background:#d1c4e9;"></div>
<span style="left:104.80px;top:346px;font-size:16px;font-weight:700;">И3</span>
<span style="left:429.36px;top:346px;font-size:16px;font-weight:700;letter-spacing:-0.236px;">Итого по Главе 3</span>
<span style="left:933.50px;top:346px;font-size:16px;font-weight:700;">0,00</span>
<span style="left:1077.50px;top:346px;font-size:16px;font-weight:700;">0,00</span>
<span style="left:1221.50px;top:346px;font-size:16px;font-weight:700;">0,00</span>
<span style="left:1365.50px;top:346px;font-size:16px;font-weight:700;">0,00</span>
<span style="left:1509.50px;top:346px;font-size:16px;font-weight:700;">0,00</span>
<span style="left:1653.50px;top:346px;font-size:16px;font-weight:700;">0,00</span>
<span style="left:1797.50px;top:346px;font-size:16px;font-weight:700;">0,00</span>
<span style="left:1941.50px;top:346px;font-size:16px;font-weight:700;">0,00</span>
<span style="left:2085.50px;top:346px;font-size:16px;font-weight:700;">0,00</span>
<span style="left:2229.50px;top:346px;font-size:16px;font-weight:700;">0,00</span>
<div style="left:52px;top:412px;width:2222px;height:1px;background:#d1c4e9;"></div>
<div style="left:186px;top:378px;width:1px;height:33px;background:#d1c4e9;"></div>
<div style="left:414px;top:378px;width:1px;height:33px;background:#d1c4e9;"></div>
<div style="left:834px;top:378px;width:1px;height:33px;background:#d1c4e9;"></div>
<div style="left:1554px;top:378px;width:1px;height:33px;background:#d1c4e9;"></div>
<div style="left:2274px;top:378px;width:1px;height:33px;background:#d1c4e9;"></div>
<span style="left:110.41px;top:381px;font-size:16.5px;">4</span>
<span style="left:429.36px;top:382px;font-size:16px;font-weight:700;letter-spacing:-0.089px;">Глава 4. Объекты энергетического хозяйства</span>
<div style="left:52px;top:413px;width:2222px;height:35px;background:#ede9fd;"></div>
<div style="left:52px;top:448px;width:2222px;height:1px;background:#d1c4e9;"></div>
<div style="left:186px;top:414px;width:1px;height:33px;background:#d1c4e9;"></div>
<div style="left:414px;top:414px;width:1px;height:33px;background:#d1c4e9;"></div>
<div style="left:834px;top:414px;width:1px;height:33px;background:#d1c4e9;"></div>
<div style="left:978px;top:414px;width:1px;height:33px;background:#d1c4e9;"></div>
<div style="left:1122px;top:414px;width:1px;height:33px;background:#d1c4e9;"></div>
<div style="left:1266px;top:414px;width:1px;height:33px;background:#d1c4e9;"></div>
<div style="left:1410px;top:414px;width:1px;height:33px;background:#d1c4e9;"></div>
<div style="left:1554px;top:414px;width:1px;height:33px;background:#d1c4e9;"></div>
<div style="left:1698px;top:414px;width:1px;height:33px;background:#d1c4e9;"></div>
<div style="left:1842px;top:414px;width:1px;height:33px;background:#d1c4e9;"></div>
<div style="left:1986px;top:414px;width:1px;height:33px;background:#d1c4e9;"></div>
<div style="left:2130px;top:414px;width:1px;height:33px;background:#d1c4e9;"></div>
<div style="left:2274px;top:414px;width:1px;height:33px;background:#d1c4e9;"></div>
<span style="left:104.80px;top:418px;font-size:16px;font-weight:700;">И4</span>
<span style="left:429.36px;top:418px;font-size:16px;font-weight:700;letter-spacing:-0.236px;">Итого по Главе 4</span>
<span style="left:933.50px;top:418px;font-size:16px;font-weight:700;">0,00</span>
<span style="left:1077.50px;top:418px;font-size:16px;font-weight:700;">0,00</span>
<span style="left:1221.50px;top:418px;font-size:16px;font-weight:700;">0,00</span>
<span style="left:1365.50px;top:418px;font-size:16px;font-weight:700;">0,00</span>
<span style="left:1509.50px;top:418px;font-size:16px;font-weight:700;">0,00</span>
<span style="left:1653.50px;top:418px;font-size:16px;font-weight:700;">0,00</span>
<span style="left:1797.50px;top:418px;font-size:16px;font-weight:700;">0,00</span>
<span style="left:1941.50px;top:418px;font-size:16px;font-weight:700;">0,00</span>
<span style="left:2085.50px;top:418px;font-size:16px;font-weight:700;">0,00</span>
<span style="left:2229.50px;top:418px;font-size:16px;font-weight:700;">0,00</span>
<div style="left:52px;top:501px;width:2222px;height:1px;background:#d1c4e9;"></div>
<div style="left:186px;top:450px;width:1px;height:50px;background:#d1c4e9;"></div>
<div style="left:414px;top:450px;width:1px;height:50px;background:#d1c4e9;"></div>
<div style="left:834px;top:450px;width:1px;height:50px;background:#d1c4e9;"></div>
<div style="left:1554px;top:450px;width:1px;height:50px;background:#d1c4e9;"></div>
<div style="left:2274px;top:450px;width:1px;height:50px;background:#d1c4e9;"></div>
<span style="left:110.41px;top:453px;font-size:16.5px;">5</span>
<span style="left:429.36px;top:454px;font-size:16px;font-weight:700;letter-spacing:-0.155px;">Глава 5. Объекты транспортного хозяйства и</span>
<span style="left:429.36px;top:474px;font-size:16px;font-weight:700;letter-spacing:0.041px;">связи</span>
<div style="left:52px;top:502px;width:2222px;height:35px;background:#ede9fd;"></div>
<div style="left:52px;top:537px;width:2222px;height:1px;background:#d1c4e9;"></div>
<div style="left:186px;top:503px;width:1px;height:33px;background:#d1c4e9;"></div>
<div style="left:414px;top:503px;width:1px;height:33px;background:#d1c4e9;"></div>
<div style="left:834px;top:503px;width:1px;height:33px;background:#d1c4e9;"></div>
<div style="left:978px;top:503px;width:1px;height:33px;background:#d1c4e9;"></div>
<div style="left:1122px;top:503px;width:1px;height:33px;background:#d1c4e9;"></div>
<div style="left:1266px;top:503px;width:1px;height:33px;background:#d1c4e9;"></div>
<div style="left:1410px;top:503px;width:1px;height:33px;background:#d1c4e9;"></div>
<div style="left:1554px;top:503px;width:1px;height:33px;background:#d1c4e9;"></div>
<div style="left:1698px;top:503px;width:1px;height:33px;background:#d1c4e9;"></div>
<div style="left:1842px;top:503px;width:1px;height:33px;background:#d1c4e9;"></div>
<div style="left:1986px;top:503px;width:1px;height:33px;background:#d1c4e9;"></div>
<div style="left:2130px;top:503px;width:1px;height:33px;background:#d1c4e9;"></div>
<div style="left:2274px;top:503px;width:1px;height:33px;background:#d1c4e9;"></div>
<span style="left:104.80px;top:507px;font-size:16px;font-weight:700;">И5</span>
<span style="left:429.36px;top:507px;font-size:16px;font-weight:700;letter-spacing:-0.236px;">Итого по Главе 5</span>
<span style="left:933.50px;top:507px;font-size:16px;font-weight:700;">0,00</span>
<span style="left:1077.50px;top:507px;font-size:16px;font-weight:700;">0,00</span>
<span style="left:1221.50px;top:507px;font-size:16px;font-weight:700;">0,00</span>
<span style="left:1365.50px;top:507px;font-size:16px;font-weight:700;">0,00</span>
<span style="left:1509.50px;top:507px;font-size:16px;font-weight:700;">0,00</span>
<span style="left:1653.50px;top:507px;font-size:16px;font-weight:700;">0,00</span>
<span style="left:1797.50px;top:507px;font-size:16px;font-weight:700;">0,00</span>
<span style="left:1941.50px;top:507px;font-size:16px;font-weight:700;">0,00</span>
<span style="left:2085.50px;top:507px;font-size:16px;font-weight:700;">0,00</span>
<span style="left:2229.50px;top:507px;font-size:16px;font-weight:700;">0,00</span>
<div style="left:52px;top:611px;width:2222px;height:1px;background:#d1c4e9;"></div>
<div style="left:186px;top:539px;width:1px;height:71px;background:#d1c4e9;"></div>
<div style="left:414px;top:539px;width:1px;height:71px;background:#d1c4e9;"></div>
<div style="left:834px;top:539px;width:1px;height:71px;background:#d1c4e9;"></div>
<div style="left:1554px;top:539px;width:1px;height:71px;background:#d1c4e9;"></div>
<div style="left:2274px;top:539px;width:1px;height:71px;background:#d1c4e9;"></div>
<span style="left:110.41px;top:542px;font-size:16.5px;">6</span>
<span style="left:429.36px;top:543px;font-size:16px;font-weight:700;letter-spacing:-0.060px;">Глава 6. Наружные сети и сооружения</span>
<span style="left:429.36px;top:563px;font-size:16px;font-weight:700;letter-spacing:-0.084px;">водоснабжения, водоотведения,</span>
<span style="left:429.36px;top:583px;font-size:16px;font-weight:700;letter-spacing:0.028px;">теплоснабжения и газоснабжения</span>
<div style="left:52px;top:612px;width:2222px;height:35px;background:#ede9fd;"></div>
<div style="left:52px;top:647px;width:2222px;height:1px;background:#d1c4e9;"></div>
<div style="left:186px;top:613px;width:1px;height:33px;background:#d1c4e9;"></div>
<div style="left:414px;top:613px;width:1px;height:33px;background:#d1c4e9;"></div>
<div style="left:834px;top:613px;width:1px;height:33px;background:#d1c4e9;"></div>
<div style="left:978px;top:613px;width:1px;height:33px;background:#d1c4e9;"></div>
<div style="left:1122px;top:613px;width:1px;height:33px;background:#d1c4e9;"></div>
<div style="left:1266px;top:613px;width:1px;height:33px;background:#d1c4e9;"></div>
<div style="left:1410px;top:613px;width:1px;height:33px;background:#d1c4e9;"></div>
<div style="left:1554px;top:613px;width:1px;height:33px;background:#d1c4e9;"></div>
<div style="left:1698px;top:613px;width:1px;height:33px;background:#d1c4e9;"></div>
<div style="left:1842px;top:613px;width:1px;height:33px;background:#d1c4e9;"></div>
<div style="left:1986px;top:613px;width:1px;height:33px;background:#d1c4e9;"></div>
<div style="left:2130px;top:613px;width:1px;height:33px;background:#d1c4e9;"></div>
<div style="left:2274px;top:613px;width:1px;height:33px;background:#d1c4e9;"></div>
<span style="left:104.80px;top:617px;font-size:16px;font-weight:700;">И6</span>
<span style="left:429.36px;top:617px;font-size:16px;font-weight:700;letter-spacing:-0.236px;">Итого по Главе 6</span>
<span style="left:933.50px;top:617px;font-size:16px;font-weight:700;">0,00</span>
<span style="left:1077.50px;top:617px;font-size:16px;font-weight:700;">0,00</span>
<span style="left:1221.50px;top:617px;font-size:16px;font-weight:700;">0,00</span>
<span style="left:1365.50px;top:617px;font-size:16px;font-weight:700;">0,00</span>
<span style="left:1509.50px;top:617px;font-size:16px;font-weight:700;">0,00</span>
<span style="left:1653.50px;top:617px;font-size:16px;font-weight:700;">0,00</span>
<span style="left:1797.50px;top:617px;font-size:16px;font-weight:700;">0,00</span>
<span style="left:1941.50px;top:617px;font-size:16px;font-weight:700;">0,00</span>
<span style="left:2085.50px;top:617px;font-size:16px;font-weight:700;">0,00</span>
<span style="left:2229.50px;top:617px;font-size:16px;font-weight:700;">0,00</span>
<div style="left:52px;top:700px;width:2222px;height:1px;background:#d1c4e9;"></div>
<div style="left:186px;top:649px;width:1px;height:50px;background:#d1c4e9;"></div>
<div style="left:414px;top:649px;width:1px;height:50px;background:#d1c4e9;"></div>
<div style="left:834px;top:649px;width:1px;height:50px;background:#d1c4e9;"></div>
<div style="left:1554px;top:649px;width:1px;height:50px;background:#d1c4e9;"></div>
<div style="left:2274px;top:649px;width:1px;height:50px;background:#d1c4e9;"></div>
<span style="left:110.41px;top:652px;font-size:16.5px;">7</span>
<span style="left:429.36px;top:653px;font-size:16px;font-weight:700;letter-spacing:-0.204px;">Глава 7. Благоустройство и озеленение</span>
<span style="left:429.36px;top:673px;font-size:16px;font-weight:700;letter-spacing:-0.205px;">территории</span>
<div style="left:52px;top:701px;width:2222px;height:35px;background:#ede9fd;"></div>
<div style="left:52px;top:736px;width:2222px;height:1px;background:#d1c4e9;"></div>
<div style="left:186px;top:702px;width:1px;height:33px;background:#d1c4e9;"></div>
<div style="left:414px;top:702px;width:1px;height:33px;background:#d1c4e9;"></div>
<div style="left:834px;top:702px;width:1px;height:33px;background:#d1c4e9;"></div>
<div style="left:978px;top:702px;width:1px;height:33px;background:#d1c4e9;"></div>
<div style="left:1122px;top:702px;width:1px;height:33px;background:#d1c4e9;"></div>
<div style="left:1266px;top:702px;width:1px;height:33px;background:#d1c4e9;"></div>
<div style="left:1410px;top:702px;width:1px;height:33px;background:#d1c4e9;"></div>
<div style="left:1554px;top:702px;width:1px;height:33px;background:#d1c4e9;"></div>
<div style="left:1698px;top:702px;width:1px;height:33px;background:#d1c4e9;"></div>
<div style="left:1842px;top:702px;width:1px;height:33px;background:#d1c4e9;"></div>
<div style="left:1986px;top:702px;width:1px;height:33px;background:#d1c4e9;"></div>
<div style="left:2130px;top:702px;width:1px;height:33px;background:#d1c4e9;"></div>
<div style="left:2274px;top:702px;width:1px;height:33px;background:#d1c4e9;"></div>
<span style="left:104.80px;top:706px;font-size:16px;font-weight:700;">И7</span>
<span style="left:429.36px;top:706px;font-size:16px;font-weight:700;letter-spacing:-0.236px;">Итого по Главе 7</span>
<span style="left:933.50px;top:706px;font-size:16px;font-weight:700;">0,00</span>
<span style="left:1077.50px;top:706px;font-size:16px;font-weight:700;">0,00</span>
<span style="left:1221.50px;top:706px;font-size:16px;font-weight:700;">0,00</span>
<span style="left:1365.50px;top:706px;font-size:16px;font-weight:700;">0,00</span>
<span style="left:1509.50px;top:706px;font-size:16px;font-weight:700;">0,00</span>
<span style="left:1653.50px;top:706px;font-size:16px;font-weight:700;">0,00</span>
<span style="left:1797.50px;top:706px;font-size:16px;font-weight:700;">0,00</span>
<span style="left:1941.50px;top:706px;font-size:16px;font-weight:700;">0,00</span>
<span style="left:2085.50px;top:706px;font-size:16px;font-weight:700;">0,00</span>
<span style="left:2229.50px;top:706px;font-size:16px;font-weight:700;">0,00</span>
<div style="left:52px;top:737px;width:2222px;height:35px;background:#ede9fd;"></div>
<div style="left:52px;top:772px;width:2222px;height:1px;background:#d1c4e9;"></div>
<div style="left:186px;top:738px;width:1px;height:33px;background:#d1c4e9;"></div>
<div style="left:414px;top:738px;width:1px;height:33px;background:#d1c4e9;"></div>
<div style="left:834px;top:738px;width:1px;height:33px;background:#d1c4e9;"></div>
<div style="left:978px;top:738px;width:1px;height:33px;background:#d1c4e9;"></div>
<div style="left:1122px;top:738px;width:1px;height:33px;background:#d1c4e9;"></div>
<div style="left:1266px;top:738px;width:1px;height:33px;background:#d1c4e9;"></div>
<div style="left:1410px;top:738px;width:1px;height:33px;background:#d1c4e9;"></div>
<div style="left:1554px;top:738px;width:1px;height:33px;background:#d1c4e9;"></div>
<div style="left:1698px;top:738px;width:1px;height:33px;background:#d1c4e9;"></div>
<div style="left:1842px;top:738px;width:1px;height:33px;background:#d1c4e9;"></div>
<div style="left:1986px;top:738px;width:1px;height:33px;background:#d1c4e9;"></div>
<div style="left:2130px;top:738px;width:1px;height:33px;background:#d1c4e9;"></div>
<div style="left:2274px;top:738px;width:1px;height:33px;background:#d1c4e9;"></div>
<span style="left:100.27px;top:742px;font-size:16px;font-weight:700;">ИГ7</span>
<span style="left:429.36px;top:742px;font-size:16px;font-weight:700;letter-spacing:-0.089px;">Итого по Главам 1-7</span>
<span style="left:902.36px;top:742px;font-size:16px;font-weight:700;">3 190,74</span>
<span style="left:1077.50px;top:742px;font-size:16px;font-weight:700;">0,00</span>
<span style="left:1221.50px;top:742px;font-size:16px;font-weight:700;">0,00</span>
<span style="left:1365.50px;top:742px;font-size:16px;font-weight:700;">0,00</span>
<span style="left:1478.36px;top:742px;font-size:16px;font-weight:700;">3 190,74</span>
<span style="left:1622.36px;top:742px;font-size:16px;font-weight:700;">2 625,88</span>
<span style="left:1797.50px;top:742px;font-size:16px;font-weight:700;">0,00</span>
<span style="left:1941.50px;top:742px;font-size:16px;font-weight:700;">0,00</span>
<span style="left:2085.50px;top:742px;font-size:16px;font-weight:700;">0,00</span>
<span style="left:2198.36px;top:742px;font-size:16px;font-weight:700;">2 625,88</span>
</div>
<div style="left:415px;top:626px;width:420px;height:35px;border:1px solid #000;box-sizing:border-box"></div>
<span style="left:850.28px;top:486px;font-size:10.6px;font-weight:700;font-style:italic;color:#0a44ff;font-family:'Liberation Serif',serif;">f</span>
<span style="left:855.56px;top:489px;font-size:8.5px;font-weight:700;font-style:italic;color:#0a44ff;font-family:'Liberation Serif',serif;">x</span>
<span style="left:1570.28px;top:486px;font-size:10.6px;font-weight:700;font-style:italic;color:#0a44ff;font-family:'Liberation Serif',serif;">f</span>
<span style="left:1575.56px;top:489px;font-size:8.5px;font-weight:700;font-style:italic;color:#0a44ff;font-family:'Liberation Serif',serif;">x</span>
<svg style="left:55px;top:596px;" width="18" height="14" viewBox="0 0 18 14"><g fill="none" stroke="#d0452c" stroke-width="1.3"><path d="M3.6 12.4h10M5.6 12l1.6-5.8h2.8L11.6 12"/><path d="M8.8 1v2.8M3.6 2.8l1.8 2.2M14 2.8l-1.8 2.2M1.4 8.2h2.8M13.4 8.2h2.8"/></g></svg>
<div style="left:2516px;top:446px;width:9px;height:275px;background:#a898d8;border-radius:4.5px"></div>
<div style="left:2526px;top:293px;width:35px;height:1px;background:#d1c4e9;"></div>
<div style="left:2526px;top:508px;width:35px;height:1px;background:#d1c4e9;"></div>
<div id="vt" style="left:2546.6px;top:318px;width:0;height:0;overflow:visible"><div style="position:absolute;left:0;top:0;transform-origin:0 0;transform:rotate(90deg);white-space:nowrap;font-size:18px;line-height:20px;color:#000;margin:0"><span id="vts" style="position:absolute;left:0;top:-10.5px;letter-spacing:0.128px;-webkit-text-stroke:0.45px #000">Список начислений</span></div></div>
<div style="left:51px;top:1196px;width:300.3px;height:46px;background:#ffecb3;"></div>
<div style="left:51px;top:1196px;width:300.3px;height:6px;background:#ffa000;"></div>
<svg style="left:86.9px;top:1206px;" width="27" height="26" viewBox="0 0 27 26"><rect x="0" y="6.4" width="10.6" height="19.2" fill="#e8b56f"/><rect x="11.2" y="0" width="15" height="25.6" fill="#512da8"/><rect x="13.0" y="2.2" width="2.6" height="2.4" fill="#fff"/><rect x="17.2" y="2.2" width="2.6" height="2.4" fill="#fff"/><rect x="21.4" y="2.2" width="2.6" height="2.4" fill="#fff"/><rect x="13.0" y="6.5" width="2.6" height="2.4" fill="#fff"/><rect x="17.2" y="6.5" width="2.6" height="2.4" fill="#fff"/><rect x="21.4" y="6.5" width="2.6" height="2.4" fill="#fff"/><rect x="13.0" y="10.8" width="2.6" height="2.4" fill="#fff"/><rect x="17.2" y="10.8" width="2.6" height="2.4" fill="#fff"/><rect x="21.4" y="10.8" width="2.6" height="2.4" fill="#fff"/><rect x="13.0" y="15.099999999999998" width="2.6" height="2.4" fill="#fff"/><rect x="17.2" y="15.099999999999998" width="2.6" height="2.4" fill="#fff"/><rect x="21.4" y="15.099999999999998" width="2.6" height="2.4" fill="#fff"/><rect x="16.4" y="20.4" width="4.4" height="3.4" fill="#fff"/><rect x="1.8" y="9" width="2.4" height="2.2" fill="#f7e3c3"/><rect x="5.8" y="9" width="2.4" height="2.2" fill="#f7e3c3"/><rect x="1.8" y="13" width="2.4" height="2.2" fill="#f7e3c3"/><rect x="5.8" y="13" width="2.4" height="2.2" fill="#f7e3c3"/><rect x="1.8" y="17" width="2.4" height="2.2" fill="#f7e3c3"/><rect x="5.8" y="17" width="2.4" height="2.2" fill="#f7e3c3"/><rect x="1.8" y="21" width="2.4" height="2.2" fill="#f7e3c3"/><rect x="5.8" y="21" width="2.4" height="2.2" fill="#f7e3c3"/></svg>
<span style="left:121.70px;top:1208px;font-size:20px;font-weight:700;letter-spacing:-0.320px;">Сводный сметны…</span>
<svg style="left:322px;top:1208px;" width="22" height="22" viewBox="0 0 22 22"><path d="M4 4.2L18 17.4M18 4.2L4 17.4" stroke="#000" stroke-width="1.7" fill="none"/></svg>
<svg style="left:386px;top:1204px;" width="30" height="30" viewBox="0 0 30 30"><g fill="none" stroke="#e8b15f" stroke-width="1.3"><path d="M4.5 13.5V26.5M24.5 13.5V26.5M11 13.5V26.5M18 13.5V26.5M4.5 13.5H24.5M14.5 5.5L6 13.5M14.5 5.5L23 13.5M14.5 5.5V13.5"/></g>
<path d="M1.8 12.4L14.5 2 27.2 12.4" fill="none" stroke="#512da8" stroke-width="1.8"/>
<rect x="3" y="26.3" width="23" height="1.5" fill="#7a7a7a"/></svg>
<span style="left:422.68px;top:1208px;font-size:20.5px;color:#666;letter-spacing:-0.433px;">Строительные ра…</span>
<svg style="left:622px;top:1208px;" width="22" height="22" viewBox="0 0 22 22"><path d="M4 4.2L18 17.4M18 4.2L4 17.4" stroke="#000" stroke-width="1.7" fill="none"/></svg>
<div style="left:1913px;top:1196px;width:1px;height:41px;background:#d1c4e9;"></div>
<span style="left:1931.58px;top:1208px;font-size:20.5px;font-weight:700;color:#000;letter-spacing:-0.543px;">Всего</span>
<span style="left:2015.00px;top:1209px;font-size:20px;color:#1a1a1a;letter-spacing:0.268px;">Б: 3 422,83 тыс. р.</span>
<span style="left:2216.50px;top:1209px;font-size:20px;color:#1a1a1a;letter-spacing:0.334px;">Т: 4 159,11 тыс. р.</span>
<div style="left:817px;top:661px;width:258px;height:223px;background:#fff;box-shadow:0 3px 7px 1px rgba(0,0,0,.32),0 1px 16px rgba(0,0,0,.10)"></div>
<span style="left:833.76px;top:673px;font-size:16px;font-weight:700;color:#000;letter-spacing:-0.192px;">Вставка:</span>
<div style="left:817px;top:701.2px;width:258px;height:1.4px;background:#e2e6e4;"></div>
<div style="left:817px;top:752.5px;width:258px;height:2px;background:#e9eceb;"></div>
<div style="left:817px;top:836px;width:258px;height:2px;background:#e8e8e8;"></div>
<svg style="left:834.6px;top:714.6px;" width="18" height="21" viewBox="0 0 18 21"><rect x="0.9" y="0.9" width="16" height="19" rx="1.6" fill="#fff" stroke="#9a9a9a" stroke-width="1"/>
<rect x="3" y="3.4" width="11.8" height="1" fill="#b5b5b5"/><rect x="3" y="5.8" width="11.8" height="2.1" rx="0.6" fill="#673ab7"/>
<rect x="3" y="9.4" width="11.8" height="1" fill="#b5b5b5"/><rect x="3" y="11.7" width="11.8" height="1.5" fill="#c9c9c9"/>
<rect x="10.4" y="16.6" width="4.2" height="0.9" fill="#b5b5b5"/></svg>
<span style="left:868.06px;top:716px;font-size:16px;color:#111;letter-spacing:0.471px;">Начисление</span>
<svg style="left:834.6px;top:769.3px;" width="19" height="17" viewBox="0 0 19 17"><rect x="0" y="0" width="10.8" height="5" fill="#4a3694"/><rect x="0" y="11.3" width="10.8" height="5" fill="#4a3694"/><rect x="7.6" y="5.6" width="10.8" height="4.9" fill="#d0452c"/><path d="M0.4 8.1h4.6M3.2 6.3l1.9 1.8-1.9 1.8" fill="none" stroke="#4a3694" stroke-width="1"/></svg>
<span style="left:868.06px;top:769px;font-size:16px;color:#111;letter-spacing:0.546px;">Исключить из расчета</span>
<svg style="left:833.5px;top:803.8px;" width="19.6" height="19.6" viewBox="0 0 24 24"><path fill="#d0452c" d="M19 8h-1V3H6v5H5c-1.66 0-3 1.34-3 3v6h4v4h12v-4h4v-6c0-1.66-1.34-3-3-3zM8 5h8v3H8V5zm8 12v2H8v-4h8v2zm2-2v-2H6v2H4v-4c0-.55.45-1 1-1h14c.55 0 1 .45 1 1v4h-2z"/><circle cx="18" cy="11.5" r="1" fill="#d0452c"/></svg>
<span style="left:868.06px;top:805px;font-size:16px;color:#111;letter-spacing:0.598px;">Исключить из печати</span>
<svg style="left:835.5px;top:849.5px;" width="16" height="20" viewBox="0 0 16 20"><path d="M1.8 5h12.4l-0.8 12.4a2 2 0 0 1-2 1.8h-6.8a2 2 0 0 1-2-1.8z" fill="#d0452c"/><path d="M0.6 1.6h4l1-1.1h4.8l1 1.1h4v2H0.6z" fill="#d0452c"/></svg>
<span style="left:868.06px;top:851px;font-size:16px;color:#111;letter-spacing:0.571px;">Удалить</span>
<div style="left:816.5px;top:697.4px;width:260px;height:54.8px;border:3px solid #ed1c24;border-radius:1px;box-sizing:border-box"></div>
<svg style="left:0px;top:0px;pointer-events:none" width="2563" height="1246" viewBox="0 0 2563 1246"><g stroke="#ed1c24" stroke-width="3" fill="none"><path d="M104 217.4L611.3 640.4"/><path d="M612.6 641L805 722.5"/></g>
<path d="M93.4 208.4L112 214.5 102 226z" fill="#ed1c24"/><path d="M816.3 727.9L803 714.3 796.4 728.8z" fill="#ed1c24"/></svg>
<div style="left:2px;top:3px;width:2559px;height:1px;background:#e2e4e2;"></div>
<div style="left:0px;top:0px;width:2563px;height:1px;background:#707070;"></div>
<div style="left:0px;top:0px;width:1px;height:1246px;background:#707070;"></div>
<div style="left:2561px;top:1px;width:1px;height:1244px;background:#a9c4e4;"></div>
<div style="left:2562px;top:0px;width:1px;height:1246px;background:#787878;"></div>
<div style="left:1px;top:1242px;width:2560px;height:2px;background:#adb4be;"></div>
<div style="left:1px;top:1244px;width:2561px;height:1px;background:#dfeaf7;"></div>
<div style="left:0px;top:1245px;width:2563px;height:1px;background:#767676;"></div>
</div></body></html>
